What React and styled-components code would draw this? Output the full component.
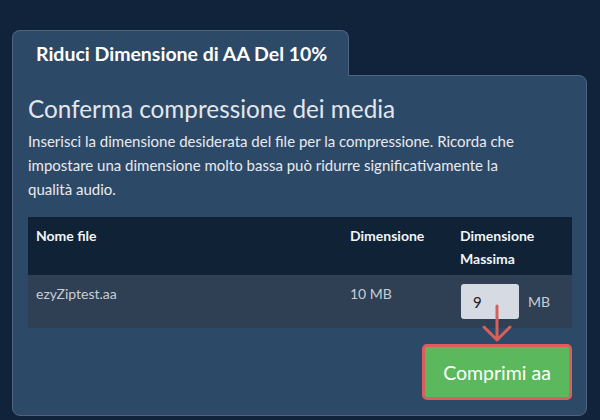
import React from 'react';
import styled, { createGlobalStyle } from 'styled-components';

const GlobalStyle = createGlobalStyle`
  html, body {
    margin: 0;
    background: #10233a;
    font-family: Lato, "Open Sans", sans-serif;
  }
`;

const Page = styled.div`
  padding: 30px 13px 0 12px;
`;

const Tab = styled.div`
  position: relative;
  z-index: 1;
  display: inline-block;
  height: 46px;
  line-height: 46px;
  padding: 0 0 0 23px;
  margin-bottom: -1px;
  background: #2d4968;
  border: 1px solid #4d6580;
  border-bottom: none;
  border-radius: 8px 8px 0 0;
  color: #ffffff;
  font-size: 19.5px;
  font-weight: 700;
  box-sizing: border-box;
  width: 337px;
  white-space: nowrap;
`;

const Panel = styled.div`
  background: #2d4968;
  border: 1px solid #4d6580;
  border-radius: 0 8px 8px 8px;
  padding: 18px 14px 15px 15px;
`;

const Heading = styled.h2`
  margin: 0;
  font-size: 24.3px;
  font-weight: 400;
  line-height: 30px;
  color: #e3e7ec;
`;

const Intro = styled.p`
  width: 516px;
  margin: 5px 0 0;
  font-size: 15px;
  line-height: 24px;
  color: #e8eaee;
`;

const Table = styled.table`
  width: 544px;
  margin-top: 16px;
  border-collapse: collapse;
  table-layout: fixed;
`;

const HeadCell = styled.th`
  box-sizing: border-box;
  width: ${p => p.$width}px;
  background: #0f2236;
  color: #f2f4f6;
  font-size: 14px;
  font-weight: 700;
  text-align: left;
  vertical-align: top;
  line-height: 23px;
  padding: 7px 8px 5px;
  height: 58px;
`;

const Cell = styled.td`
  box-sizing: border-box;
  position: relative;
  background: #2f3f54;
  color: #c9ced5;
  font-size: 14px;
  line-height: 22px;
  vertical-align: top;
  padding: 8px 8px 0;
  height: 53px;
`;

const SizeField = styled.div`
  display: flex;
  align-items: center;
  gap: 9px;
  margin-top: 1px;
`;

const SizeInput = styled.input`
  width: 58px;
  height: 35px;
  box-sizing: border-box;
  margin-left: 1px;
  padding: 0 12px;
  border: none;
  border-radius: 3px;
  background: #d6dae2;
  color: #222;
  font-family: inherit;
  font-size: 15px;
  outline: none;
`;

const Unit = styled.span`
  font-size: 14px;
  color: #c9ced5;
`;

const Arrow = styled.svg`
  position: absolute;
  left: 30px;
  top: 29px;
  pointer-events: none;
`;

const Actions = styled.div`
  display: flex;
  justify-content: flex-end;
  width: 544px;
  margin-top: 16px;
`;

const Highlight = styled.div`
  border: 3px solid #dd5d5c;
  border-radius: 5px;
`;

const Button = styled.button`
  display: block;
  width: 144px;
  height: 50px;
  border: none;
  border-radius: 1px;
  background: #5cb85c;
  color: #ffffff;
  font-family: inherit;
  font-size: 19.5px;
  font-weight: 400;
  cursor: pointer;
`;

export default function App() {
  return (
    <>
      <GlobalStyle />
      <Page>
        <Tab>Riduci Dimensione di AA Del 10%</Tab>
        <Panel>
          <Heading>Conferma compressione dei media</Heading>
          <Intro>
            Inserisci la dimensione desiderata del file per la compressione. Ricorda che
            impostare una dimensione molto bassa può ridurre significativamente la
            qualità audio.
          </Intro>
          <Table>
            <thead>
              <tr>
                <HeadCell $width={314}>Nome file</HeadCell>
                <HeadCell $width={110}>Dimensione</HeadCell>
                <HeadCell $width={120}>Dimensione Massima</HeadCell>
              </tr>
            </thead>
            <tbody>
              <tr>
                <Cell>ezyZiptest.aa</Cell>
                <Cell>10 MB</Cell>
                <Cell>
                  <SizeField>
                    <SizeInput type="text" defaultValue="9" />
                    <Unit>MB</Unit>
                  </SizeField>
                  <Arrow width="30" height="40" viewBox="0 0 30 40">
                    <path
                      d="M15 2 V36 M2 23 L15 36 L28 23"
                      fill="none"
                      stroke="#d9605a"
                      strokeWidth="3"
                      strokeLinecap="round"
                      strokeLinejoin="round"
                    />
                  </Arrow>
                </Cell>
              </tr>
            </tbody>
          </Table>
          <Actions>
            <Highlight>
              <Button>Comprimi aa</Button>
            </Highlight>
          </Actions>
        </Panel>
      </Page>
    </>
  );
}
